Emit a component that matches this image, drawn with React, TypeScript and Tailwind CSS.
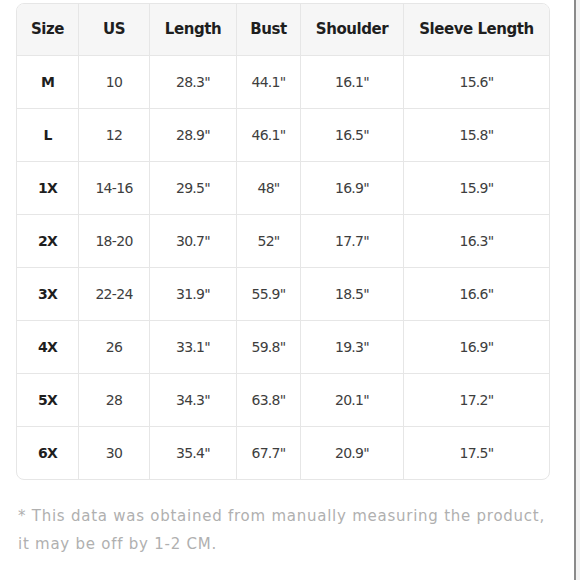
const rows = [
  ['M', '10', '28.3"', '44.1"', '16.1"', '15.6"'],
  ['L', '12', '28.9"', '46.1"', '16.5"', '15.8"'],
  ['1X', '14-16', '29.5"', '48"', '16.9"', '15.9"'],
  ['2X', '18-20', '30.7"', '52"', '17.7"', '16.3"'],
  ['3X', '22-24', '31.9"', '55.9"', '18.5"', '16.6"'],
  ['4X', '26', '33.1"', '59.8"', '19.3"', '16.9"'],
  ['5X', '28', '34.3"', '63.8"', '20.1"', '17.2"'],
  ['6X', '30', '35.4"', '67.7"', '20.9"', '17.5"'],
]

const headers = ['Size', 'US', 'Length', 'Bust', 'Shoulder', 'Sleeve Length']

// column widths taken from the picture
const cols = 'grid grid-cols-[61px_71px_87px_64px_103px_1fr]'

export default function App() {
  return (
    <div className="flex h-[580px] w-[580px] bg-white font-['DejaVu_Sans','Liberation_Sans',sans-serif]">
      <div className="w-[576px] border-r-2 border-[#8a8a8a] pl-4 pr-[24px] pt-[3px]">
        <div className="overflow-hidden rounded-lg border border-[#e6e6e6]">
          <div className={`${cols} h-[51px] bg-[#f6f6f6] text-[15px] font-bold tracking-[-0.03em] text-[#1e1e1e]`}>
            {headers.map((h, i) => (
              <div
                key={h}
                className={`flex items-center justify-center ${i > 0 ? 'border-l border-[#e6e6e6]' : ''}`}
              >
                {h}
              </div>
            ))}
          </div>
          {rows.map(r => (
            <div key={r[0]} className={`${cols} h-[53px] border-t border-[#e6e6e6] text-[14px] tracking-[-0.05em]`}>
              {r.map((v, i) => (
                <div
                  key={i}
                  className={`flex items-center justify-center ${i > 0 ? 'border-l border-[#e6e6e6] text-[#3e3e3e]' : 'font-bold text-[#1e1e1e]'}`}
                >
                  {v}
                </div>
              ))}
            </div>
          ))}
        </div>
        <p className="mt-[22px] pl-[2px] text-[15px] leading-[28px] tracking-[0.05em] text-[#b0b0b0]">
          * This data was obtained from manually measuring the product,
          <br />
          it may be off by 1-2 CM.
        </p>
      </div>
      <div className="flex-1 bg-[#f2f2f2]" />
    </div>
  )
}
